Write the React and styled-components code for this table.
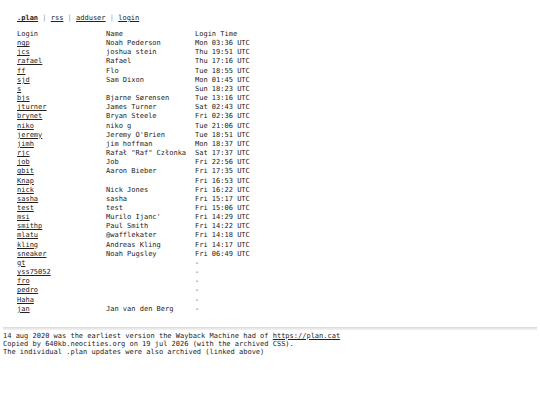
import React from 'react';
import styled, { createGlobalStyle } from 'styled-components';

const GlobalStyle = createGlobalStyle`
    body {
        margin: 0;
        background: #fff;
        color: #222;
        font-family: "DejaVu Sans Mono", "Liberation Mono", monospace;
        font-size: 7px;
    }
`;

const Page = styled.div`
    padding: 14px 3px 0 3px;
`;

const Main = styled.div`
    padding-left: 14px;
`;

const Nav = styled.nav`
    line-height: 9px;
    margin-bottom: 7px;
    white-space: pre;
`;

const NavLink = styled.a`
    color: #222;
    text-decoration: underline;
    font-weight: ${props => props.bold ? 'bold' : 'normal'};
`;

const Sep = styled.span`
    color: #999;
`;

const Table = styled.div`
    display: grid;
    grid-template-columns: 89px 89px 89px;
    grid-auto-rows: 9.17px;
    line-height: 9.17px;
`;

const Cell = styled.div`
    white-space: pre;
`;

const UserLink = styled.a`
    color: #222;
    text-decoration: underline;
`;

const Rule = styled.hr`
    margin: 13px 0 2px 0;
    border: none;
    border-top: 1px solid #ddd;
    border-bottom: 1px solid #eee;
    height: 1px;
    background: #e8e8e8;
`;

const Footer = styled.div`
    line-height: 8px;
`;

const users = [
    ['ngp', 'Noah Pederson', 'Mon 03:36 UTC'],
    ['jcs', 'joshua stein', 'Thu 19:51 UTC'],
    ['rafael', 'Rafael', 'Thu 17:16 UTC'],
    ['ff', 'Flo', 'Tue 18:55 UTC'],
    ['sjd', 'Sam Dixon', 'Mon 01:45 UTC'],
    ['s', '', 'Sun 18:23 UTC'],
    ['bjs', 'Bjarne Sørensen', 'Tue 13:16 UTC'],
    ['jturner', 'James Turner', 'Sat 02:43 UTC'],
    ['brynet', 'Bryan Steele', 'Fri 02:36 UTC'],
    ['niko', 'niko g', 'Tue 21:06 UTC'],
    ['jeremy', "Jeremy O'Brien", 'Tue 18:51 UTC'],
    ['jimh', 'jim hoffman', 'Mon 18:37 UTC'],
    ['rjc', 'Rafał "Raf" Członka', 'Sat 17:37 UTC'],
    ['job', 'Job', 'Fri 22:56 UTC'],
    ['gbit', 'Aaron Bieber', 'Fri 17:35 UTC'],
    ['Knap', '', 'Fri 16:53 UTC'],
    ['nick', 'Nick Jones', 'Fri 16:22 UTC'],
    ['sasha', 'sasha', 'Fri 15:17 UTC'],
    ['test', 'test', 'Fri 15:06 UTC'],
    ['msi', "Murilo Ijanc'", 'Fri 14:29 UTC'],
    ['smithp', 'Paul Smith', 'Fri 14:22 UTC'],
    ['mlatu', '@wafflekater', 'Fri 14:18 UTC'],
    ['kling', 'Andreas Kling', 'Fri 14:17 UTC'],
    ['sneaker', 'Noah Pugsley', 'Fri 06:49 UTC'],
    ['gt', '', '-'],
    ['yss75052', '', '-'],
    ['fro', '', '-'],
    ['pedro', '', '-'],
    ['Haha', '', '-'],
    ['jan', 'Jan van den Berg', '-'],
];

const App = () => {
    return (
        <Page>
            <GlobalStyle />
            <Main>
                <Nav>
                    <NavLink bold href="#">.plan</NavLink>
                    <Sep> | </Sep>
                    <NavLink href="#">rss</NavLink>
                    <Sep> | </Sep>
                    <NavLink href="#">adduser</NavLink>
                    <Sep> | </Sep>
                    <NavLink href="#">login</NavLink>
                </Nav>
                <Table>
                    <Cell>Login</Cell>
                    <Cell>Name</Cell>
                    <Cell>Login Time</Cell>
                    {users.map(u => (
                        <React.Fragment key={u[0]}>
                            <Cell><UserLink href="#">{u[0]}</UserLink></Cell>
                            <Cell>{u[1]}</Cell>
                            <Cell>{u[2]}</Cell>
                        </React.Fragment>
                    ))}
                </Table>
            </Main>
            <Rule />
            <Footer>
                14 aug 2020 was the earliest version the Wayback Machine had of <UserLink href="#">https://plan.cat</UserLink>
                <br />
                Copied by 640kb.neocities.org on 19 jul 2026 (with the archived CSS).
                <br />
                The individual .plan updates were also archived (linked above)
            </Footer>
        </Page>
    );
};

export default App;
